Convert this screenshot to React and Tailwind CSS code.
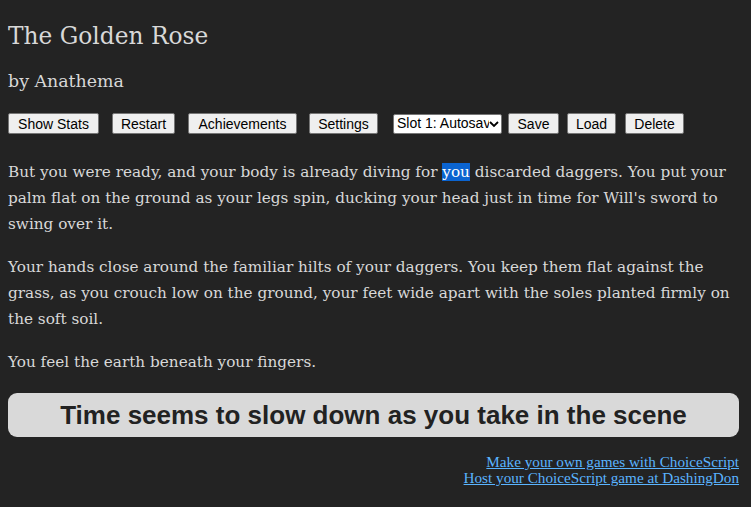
import React from "react";

const serif = { fontFamily: '"DejaVu Serif", Georgia, serif' };

function Btn({ children, className = "" }) {
  return (
    <button
      className={`h-[21px] px-[6px] bg-[#efefef] text-black border border-[#767676] rounded-[2px] text-[14px] leading-none whitespace-nowrap ${className}`}
      style={{ fontFamily: '"Liberation Sans", Arial, sans-serif' }}
    >
      {children}
    </button>
  );
}

export default function App() {
  return (
    <div className="min-h-[507px] w-[751px] bg-[#232323] text-[#d8d8d8] px-[8px] pt-[19px] overflow-hidden" style={serif}>
      <h1 className="text-[23.3px] leading-[34px] m-0">The Golden Rose</h1>
      <h2 className="text-[17.4px] leading-[24px] mt-[16px]">by Anathema</h2>
      <div className="flex items-center mt-[20px] h-[21px]">
        <Btn className="w-[91px]">Show Stats</Btn>
        <Btn className="w-[63px] ml-[13px]">Restart</Btn>
        <Btn className="w-[109px] ml-[13px]">Achievements</Btn>
        <Btn className="w-[69px] ml-[12px]">Settings</Btn>
        <div
          className="ml-[15px] w-[109px] h-[20px] bg-white text-black border border-[#767676] rounded-[2px] text-[14px] flex items-center pl-[3px] pr-[2px] overflow-hidden"
          style={{ fontFamily: '"Liberation Sans", Arial, sans-serif' }}
        >
          <span className="flex-1 whitespace-nowrap overflow-hidden">Slot 1: Autosave</span>
          <svg width="10" height="8" viewBox="0 0 10 8" className="shrink-0">
            <path d="M1 2 L5 6 L9 2" stroke="#000" strokeWidth="1.8" fill="none" />
          </svg>
        </div>
        <Btn className="w-[51px] ml-[6px]">Save</Btn>
        <Btn className="w-[49px] ml-[8px]">Load</Btn>
        <Btn className="w-[59px] ml-[9px]">Delete</Btn>
      </div>
      <div className="text-[15.25px] leading-[26px] mt-[25px] whitespace-nowrap">
        <p>
          But you were ready, and your body is already diving for{" "}
          <span className="bg-[#0b64d0] text-white">you</span> discarded daggers. You put your
          <br />
          palm flat on the ground as your legs spin, ducking your head just in time for Will's sword to
          <br />
          swing over it.
        </p>
        <p className="mt-[17px]">
          Your hands close around the familiar hilts of your daggers. You keep them flat against the
          <br />
          grass, as you crouch low on the ground, your feet wide apart with the soles planted firmly on
          <br />
          the soft soil.
        </p>
        <p className="mt-[17px]">You feel the earth beneath your fingers.</p>
      </div>
      <div
        className="mt-[18px] h-[44px] w-[731px] rounded-[9px] bg-[#d9d9d9] text-[#222] flex items-center justify-center text-[26px] font-bold"
        style={{ fontFamily: '"Liberation Sans", Arial, sans-serif' }}
      >
        Time seems to slow down as you take in the scene
      </div>
      <div
        className="mt-[17px] flex flex-col items-end text-[15.2px] leading-[16px] text-[#5ab4ff] w-[731px]"
        style={{ fontFamily: '"Liberation Serif", Georgia, serif' }}
      >
        <a className="underline">Make your own games with ChoiceScript</a>
        <a className="underline">Host your ChoiceScript game at DashingDon</a>
      </div>
    </div>
  );
}
